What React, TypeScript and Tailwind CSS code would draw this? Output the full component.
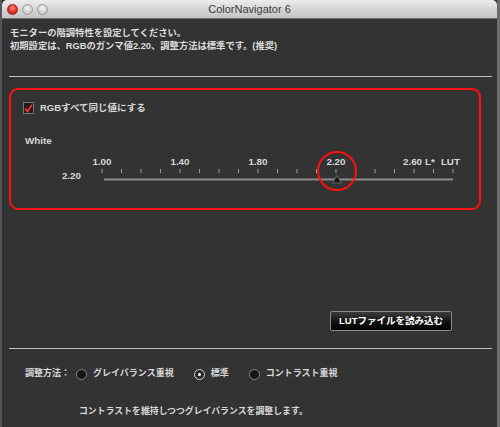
const FONT = 'font-["Liberation_Sans","Noto_Sans_CJK_JP",sans-serif]';

function Light({ red }: { red?: boolean }) {
  return (
    <span
      className={
        red
          ? 'w-[11px] h-[11px] rounded-full border border-[#a02020] bg-[radial-gradient(circle_at_50%_35%,#ff8a80,#e0302a_55%,#b81c17)]'
          : 'w-[11px] h-[11px] rounded-full border border-[#9a9a9a] bg-[radial-gradient(circle_at_50%_35%,#f4f4f4,#cfcfcf_60%,#b5b5b5)]'
      }
    />
  );
}

function Radio({ checked }: { checked?: boolean }) {
  return (
    <span
      className={
        checked
          ? 'flex w-[11px] h-[11px] rounded-full border border-[#d0d0d0] bg-[#2a2a2a] items-center justify-center'
          : 'block w-[11px] h-[11px] rounded-full border border-[#8a8a8a] bg-[#151515]'
      }
    >
      {checked && <span className="block w-[3px] h-[3px] rounded-full bg-white" />}
    </span>
  );
}

function SliderTrack() {
  const ticks = Array.from({ length: 19 }, (_, i) => 19 + i * 19.5);
  return (
    <svg width="390" height="20" viewBox="0 0 390 20" className="block">
      {ticks.map((x) => (
        <line key={x} x1={x} y1="1" x2={x} y2="5" stroke="#9a9a9a" strokeWidth="1" />
      ))}
      <line x1="21" y1="11.5" x2="370" y2="11.5" stroke="#8f8f8f" strokeWidth="2" />
      <line x1="21" y1="12.5" x2="370" y2="12.5" stroke="#5a5a5a" strokeWidth="1" />
      <polygon points="254,7.5 258.5,15 249.5,15" fill="#141414" stroke="#777" strokeWidth="0.8" />
    </svg>
  );
}

export default function App() {
  return (
    <div className={`w-[500px] h-[427px] bg-[#5b5b5b] overflow-hidden ${FONT}`}>
      <div className="h-full border-l-2 border-r-[3px] border-l-[#555] border-r-[#6c6c6c] flex flex-col bg-[#333333]">
        {/* title bar */}
        <div className="relative h-[19px] shrink-0 rounded-t-[5px] border-b border-[#6e6e6e] bg-[linear-gradient(#ececec,#d2d2d2_60%,#c4c4c4)] flex items-center">
          <div className="flex gap-[4px] pl-[5px]">
            <Light red />
            <Light />
            <Light />
          </div>
          <div className="absolute inset-0 flex items-center justify-center text-[11px] text-[#3b3b3b]">
            ColorNavigator 6
          </div>
        </div>

        <div className="flex flex-col">
          <div className="pl-[8px] pt-[8px] text-[9.3px] leading-[13px] font-bold text-[#dcdcdc]">
            <p>モニターの階調特性を設定してください。</p>
            <p>初期設定は、RGBのガンマ値2.20、調整方法は標準です。(推奨)</p>
          </div>

          <div className="mt-[23px] ml-[7px] mr-[5px] h-px bg-[#c4c4c4]" />

          {/* annotated group */}
          <div className="relative mt-[11px] ml-[7px] w-[472px] h-[122px] border-2 border-[#ff1010] rounded-[9px]">
            <div className="flex items-center gap-[6px] pl-[12px] mt-[12px] h-[12px]">
              <span className="w-[11px] h-[12px] border border-[#777] bg-[#1c1c1c] flex items-center justify-center">
                <svg width="9" height="9" viewBox="0 0 9 9">
                  <path d="M1 4.5 L3.5 7.5 L8 0.8" fill="none" stroke="#ff2a2a" strokeWidth="1.8" />
                </svg>
              </span>
              <span className="text-[9.5px] font-bold text-[#d8d8d8]">RGBすべて同じ値にする</span>
            </div>

            <div className="pl-[14px] mt-[21px] h-[12px] leading-[12px] text-[9.8px] font-bold text-[#d8d8d8]">White</div>

            <div className="mt-[9px] h-[12px] leading-[12px] flex text-[9.8px] font-bold text-[#d8d8d8] pl-[71px]">
              <span className="w-[40px] text-center">1.00</span>
              <span className="w-[40px] ml-[38px] text-center">1.40</span>
              <span className="w-[40px] ml-[38px] text-center">1.80</span>
              <span className="w-[40px] ml-[38px] text-center">2.20</span>
              <span className="ml-[47px]">2.60</span>
              <span className="ml-[3px]">L*</span>
              <span className="ml-[6px]">LUT</span>
            </div>

            <div className="flex items-start">
              <div className="w-[72px] pr-[2px] mt-[2px] text-right h-[12px] leading-[12px] text-[9.8px] font-bold text-[#d8d8d8]">2.20</div>
              <SliderTrack />
            </div>

            <div className="absolute left-[306px] top-[61px] w-[40px] h-[40px] rounded-full border-[2.5px] border-[#ff1010]" />
          </div>

          <div className="mt-[101px] flex justify-end pr-[45px]">
            <button className="w-[122px] h-[20px] rounded-[2px] border border-[#8a8a8a] bg-[linear-gradient(#3c3c3c,#101010_55%,#000)] text-[9.5px] font-bold text-white">
              LUTファイルを読み込む
            </button>
          </div>

          <div className="mt-[17px] ml-[7px] mr-[5px] h-px bg-[#c4c4c4]" />

          <div className="mt-[19px] h-[12px] flex items-center pl-[23px] text-[9px] font-bold text-[#d8d8d8]">
            <span>調整方法：</span>
            <span className="ml-[6px]"><Radio /></span>
            <span className="ml-[6px]">グレイバランス重視</span>
            <span className="ml-[20px]"><Radio checked /></span>
            <span className="ml-[6px]">標準</span>
            <span className="ml-[20px]"><Radio /></span>
            <span className="ml-[6px]">コントラスト重視</span>
          </div>

          <div className="mt-[25px] h-[12px] leading-[12px] pl-[77px] text-[8.9px] font-bold text-[#d8d8d8]">
            コントラストを維持しつつグレイバランスを調整します。
          </div>
        </div>
      </div>
    </div>
  );
}
